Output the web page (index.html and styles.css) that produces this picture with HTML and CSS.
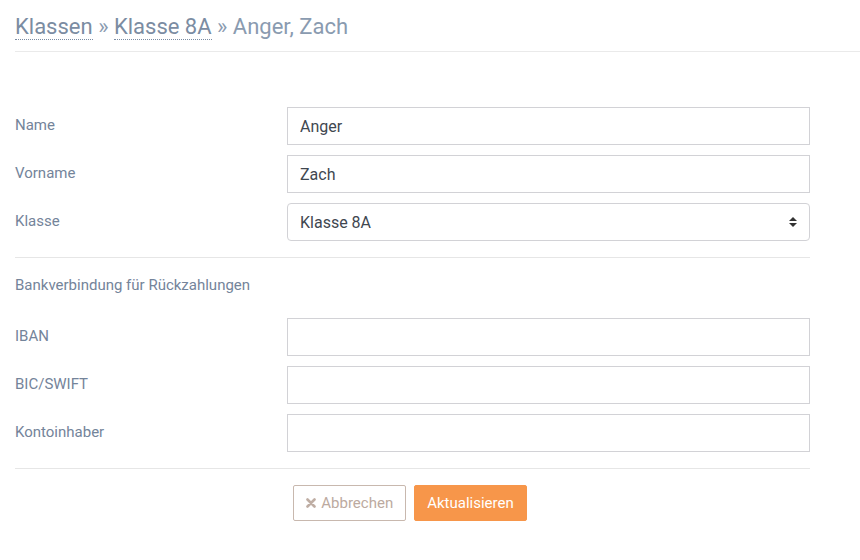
FILE: index.html
```html
<!DOCTYPE html>
<html lang="de">
<head>
<meta charset="utf-8">
<title>Anger, Zach</title>
<link rel="stylesheet" href="styles.css">
</head>
<body>
<header class="page-header">
  <h1 class="crumbs"><a href="#" class="crumb-link">Klassen</a> <span class="sep">»</span> <a href="#" class="crumb-link">Klasse 8A</a> <span class="sep">»</span> Anger, Zach</h1>
</header>
<main class="content">
  <form class="form">
    <div class="row">
      <label class="label">Name</label>
      <input class="input" type="text" value="Anger">
    </div>
    <div class="row">
      <label class="label">Vorname</label>
      <input class="input" type="text" value="Zach">
    </div>
    <div class="row">
      <label class="label">Klasse</label>
      <div class="select">
        <span>Klasse 8A</span>
        <svg class="caret" width="8" height="10" viewBox="0 0 8 10"><path d="M0 4 L4 0 L8 4 Z M0 6 L4 10 L8 6 Z" fill="#333"/></svg>
      </div>
    </div>
    <hr class="divider">
    <p class="section">Bankverbindung für Rückzahlungen</p>
    <div class="row">
      <label class="label">IBAN</label>
      <input class="input" type="text" value="">
    </div>
    <div class="row">
      <label class="label">BIC/SWIFT</label>
      <input class="input" type="text" value="">
    </div>
    <div class="row">
      <label class="label">Kontoinhaber</label>
      <input class="input" type="text" value="">
    </div>
    <hr class="divider">
    <div class="actions">
      <button type="button" class="btn btn-cancel"><svg class="x" width="10" height="10" viewBox="0 0 10 10"><path d="M1.5 1.5 L8.5 8.5 M8.5 1.5 L1.5 8.5" stroke="#bfaea4" stroke-width="2.6" stroke-linecap="round"/></svg>Abbrechen</button>
      <button type="button" class="btn btn-primary">Aktualisieren</button>
    </div>
  </form>
</main>
</body>
</html>
```
FILE: styles.css
```css
* { box-sizing: border-box; }
html, body { margin: 0; padding: 0; background: #fff; }
body {
  font-family: Roboto, "Liberation Sans", sans-serif;
  color: #495057;
  width: 860px;
}
.page-header {
  margin-left: 15px;
  border-bottom: 1px solid #eaeaea;
  padding: 13px 0 10px;
}
.crumbs {
  margin: 0;
  font-size: 22px;
  font-weight: 400;
  line-height: 28px;
  color: #8a9bb0;
}
.crumb-link {
  color: #7b8ca2;
  text-decoration: none;
  border-bottom: 1px dotted #7b8ca2;
}
.sep { color: #8a9bb0; }
.content { padding: 55px 50px 0 15px; }
.form { display: flex; flex-direction: column; }
.row {
  display: grid;
  grid-template-columns: 272px 523px;
  align-items: center;
  margin-bottom: 10px;
}
.label {
  font-size: 15px;
  color: #74849a;
  margin-top: -2px;
}
.input {
  height: 38px;
  border: 1px solid #d2d2d6;
  border-radius: 0;
  padding: 0 12px;
  font-family: Roboto, "Liberation Sans", sans-serif;
  font-size: 16px;
  color: #3f4750;
  outline: none;
}
.select {
  height: 38px;
  border: 1px solid #d2d2d6;
  border-radius: 4px;
  padding: 0 12px;
  font-size: 16px;
  color: #3f4750;
  display: flex;
  align-items: center;
  justify-content: space-between;
}
.divider {
  border: 0;
  border-top: 1px solid #e6e6e6;
  margin: 6px 0 0;
  width: 795px;
}
.section {
  margin: 18px 0 24px;
  font-size: 15px;
  line-height: 18px;
  color: #74849a;
}
.actions {
  display: flex;
  justify-content: center;
  gap: 8px;
  padding-top: 16px;
  margin-left: -5px;
}
.btn {
  height: 36px;
  padding: 0 12px;
  font-family: Roboto, "Liberation Sans", sans-serif;
  font-size: 15px;
  border-radius: 2px;
  display: inline-flex;
  align-items: center;
  gap: 5px;
}
.btn-cancel {
  background: #fff;
  border: 1px solid #c8b8ae;
  color: #bcaaa0;
}
.btn-primary {
  background: #f7964a;
  border: 1px solid #f7964a;
  color: #fff;
}
```
